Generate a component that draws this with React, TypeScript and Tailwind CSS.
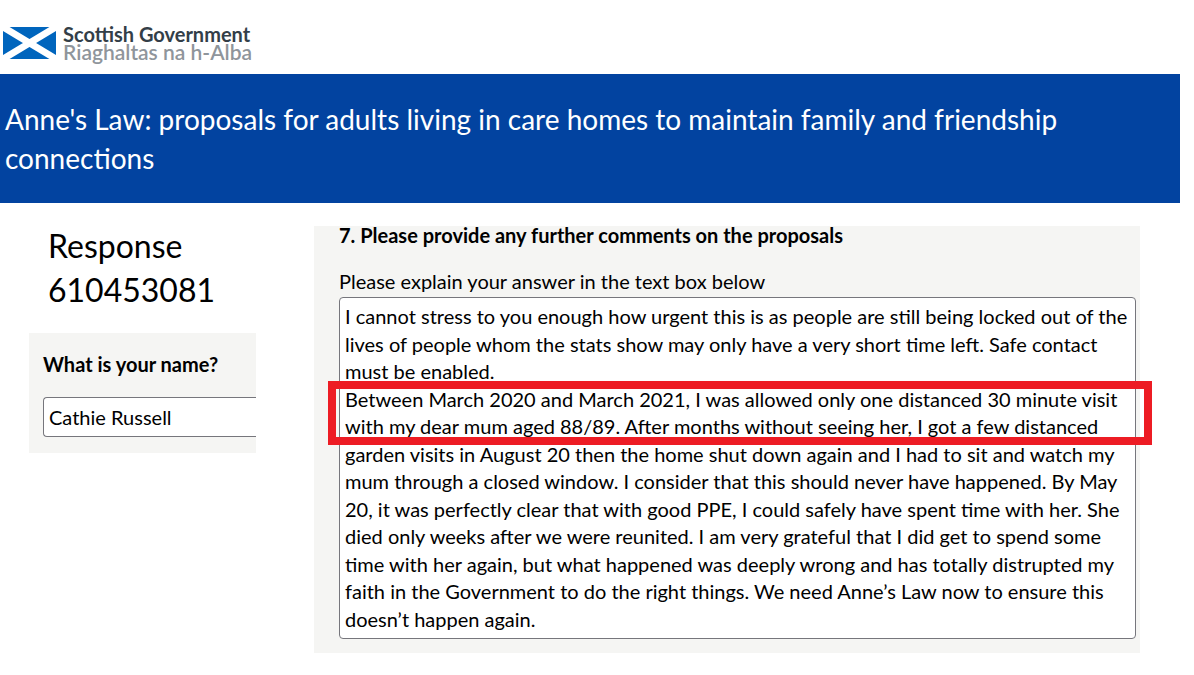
const ANSWER =
  'I cannot stress to you enough how urgent this is as people are still being locked out of the lives of people whom the stats show may only have a very short time left. Safe contact must be enabled.\n' +
  'Between March 2020 and March 2021, I was allowed only one distanced 30 minute visit with my dear mum aged 88/89. After months without seeing her, I got a few distanced garden visits in August 20 then the home shut down again and I had to sit and watch my mum through a closed window. I consider that this should never have happened. By May 20, it was perfectly clear that with good PPE, I could safely have spent time with her. She died only weeks after we were reunited. I am very grateful that I did get to spend some time with her again, but what happened was deeply wrong and has totally distrupted my faith in the Government to do the right things. We need Anne’s Law now to ensure this doesn’t happen again.';

function Logo() {
  return (
    <a href="#" aria-label="Scottish Government" className="flex items-center gap-[7px]">
      <svg width="53" height="32" viewBox="0 0 53 32" aria-hidden="true">
        <rect width="53" height="32" fill="#0065bd" />
        <path d="M0 0L53 32M53 0L0 32" stroke="#fff" strokeWidth="6.8" />
      </svg>
      <span className="flex flex-col leading-[18px]">
        <span className="text-[20px] font-bold text-[#333e48]">Scottish Government</span>
        <span className="text-[21px] font-semibold text-[#8f959b]">Riaghaltas na h-Alba</span>
      </span>
    </a>
  );
}

export default function App() {
  return (
    <div className="min-h-screen bg-white pr-[14px] font-[Lato,sans-serif] text-[20px] leading-snug text-black">
      <header className="px-[3px] pt-[25px] pb-[13px]">
        <Logo />
      </header>
      <div className="bg-[#0243a0] px-[5px] py-[26px]">
        <h1 className="text-[28px] leading-snug text-white">
          Anne's Law: proposals for adults living in care homes to maintain family and friendship connections
        </h1>
      </div>
      <main className="flex items-start">
        <aside className="ml-[29px] w-[227px] shrink-0 pt-[21px]">
          <h2 className="px-[19px] text-[32px] leading-snug">Response 610453081</h2>
          <div className="mt-[21px] bg-[#f5f5f3] pt-[18px] pb-4 pl-[14px]">
            <label htmlFor="name" className="block font-bold">
              What is your name?
            </label>
            <input
              id="name"
              type="text"
              defaultValue="Cathie Russell"
              className="mt-[18px] block h-10 w-full rounded-l-[4px] border border-r-0 border-[#76767c] bg-white px-[5px]"
            />
          </div>
        </aside>
        <section className="mt-[23px] mr-10 ml-[58px] min-w-0 flex-1 bg-[#f5f5f3] pr-1 pb-[14px] pl-[25px]">
          <h2 className="-mt-1 font-bold">7. Please provide any further comments on the proposals</h2>
          <label htmlFor="comments" className="mt-[18px] mb-[2px] block">
            Please explain your answer in the text box below
          </label>
          <div className="relative">
            <textarea
              id="comments"
              rows={12}
              defaultValue={ANSWER}
              className="block w-full resize-none overflow-hidden rounded-[4px] border border-[#76767c] bg-white p-[5px]"
            />
            <div className="pointer-events-none absolute top-[84px] -right-4 -left-[11px] h-16 border-8 border-[#ed1c24]" />
          </div>
        </section>
      </main>
    </div>
  );
}
